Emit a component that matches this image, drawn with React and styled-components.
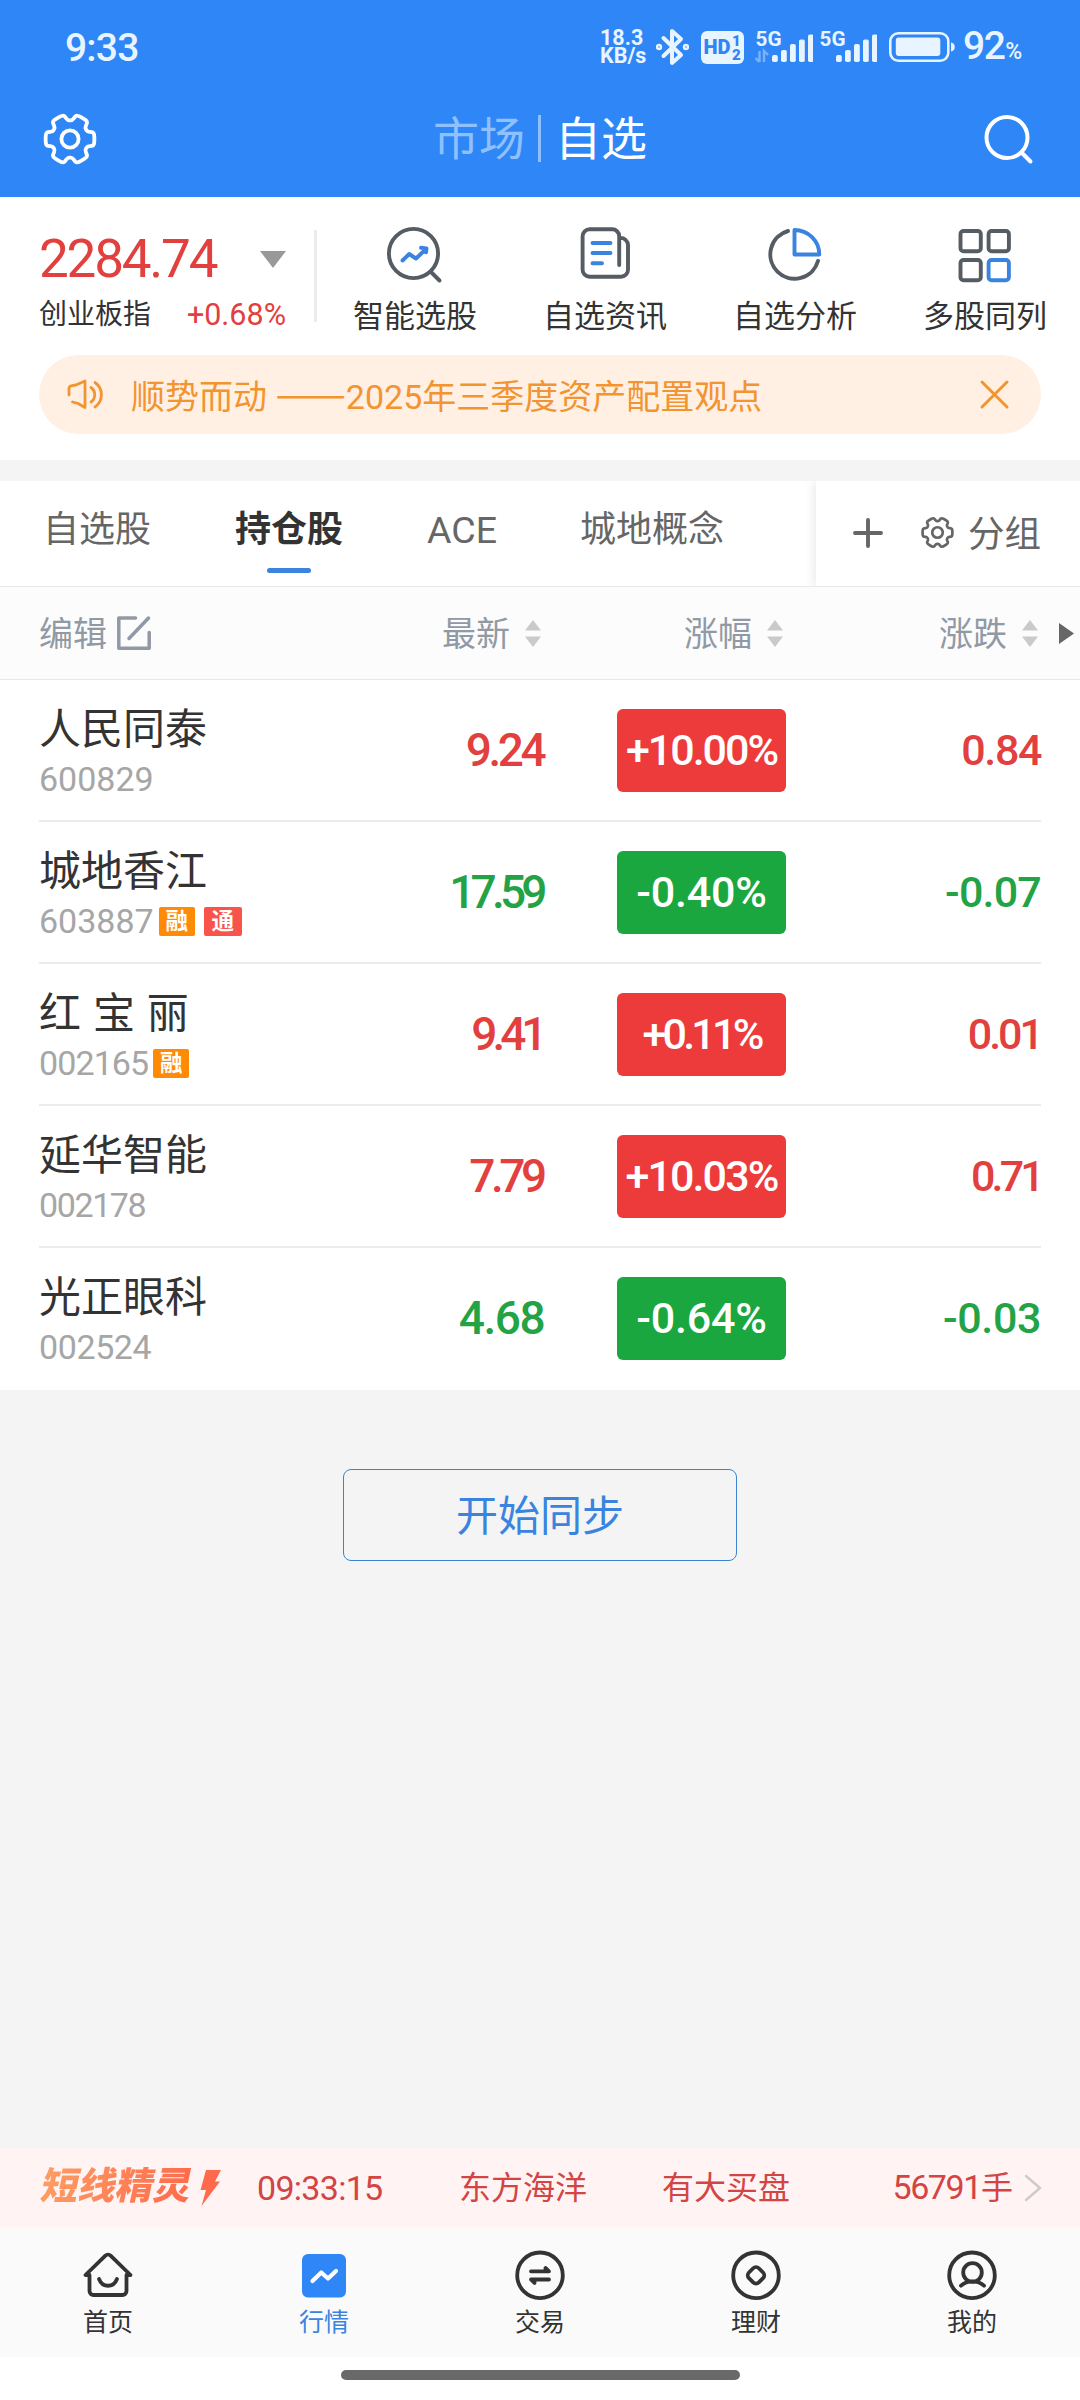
import styled, { createGlobalStyle } from 'styled-components';

const GlobalStyle = createGlobalStyle`
  * {
    box-sizing: border-box;
  }

  body {
    margin: 0;
    background: #f4f4f4;
    font-family: Roboto, 'Noto Sans CJK SC', sans-serif;
    color: #333;
  }

  svg {
    display: block;
    flex: none;
  }
`;

const colors = {
  brand: '#2f86f6',
  link: '#3a84e0',
  up: '#e2403f',
  down: '#23a246',
  upFill: '#ed3a3b',
  downFill: '#1ba73f',
  muted: '#9199a4',
  orange: '#f2942f',
};

const Screen = styled.div`
  width: 1080px;
  height: 2400px;
  display: flex;
  flex-direction: column;
  background: #f4f4f4;
  overflow: hidden;
  white-space: nowrap;
`;

/* ---------- top ---------- */

const TopArea = styled.header`
  background: ${colors.brand};
`;

const StatusBar = styled.div`
  height: 80px;
  padding: 14px 58px 0 65px;
  display: flex;
  align-items: center;
  justify-content: space-between;
  color: #e8f4ff;
`;

const Clock = styled.span`
  padding-top: 1px;
  font-size: 39px;
  font-weight: 500;
  letter-spacing: -0.8px;
`;

const StatusIcons = styled.div`
  display: flex;
  align-items: center;
`;

const NetSpeed = styled.div`
  width: 46px;
  margin-right: 10px;
  display: flex;
  flex-direction: column;
  font-size: 21.5px;
  font-weight: 700;
  line-height: 18.5px;
`;

const Gap = styled.i`
  width: ${props => props.$w}px;
`;

const BatteryLevel = styled.span`
  width: 59px;
  padding-top: 4px;
  font-size: 39px;
  font-weight: 500;
  line-height: 40px;
  letter-spacing: -1.5px;

  small {
    font-size: 23px;
    margin-left: 1px;
  }
`;

const TitleBar = styled.div`
  height: 117px;
  padding: 0 46px 0 43px;
  display: flex;
  align-items: center;
  justify-content: space-between;
  color: #fff;
`;

const TitleTabs = styled.div`
  display: flex;
  align-items: center;
`;

const TitleTab = styled.span`
  font-size: 46px;
  line-height: 60px;
  padding-top: 1px;
  color: ${props => (props.$active ? '#fff' : '#8fc0ff')};
`;

const TitleDivider = styled.i`
  width: 3px;
  height: 47px;
  margin: 0 14px 0 13px;
  background: #8fc0ff;
`;

/* ---------- index + shortcuts ---------- */

const Panel = styled.section`
  height: 263px;
  background: #fff;
`;

const PanelTop = styled.div`
  height: 158px;
  display: flex;
`;

const IndexCard = styled.div`
  width: 314px;
  padding: 32px 28px 0 39px;
`;

const IndexLine = styled.div`
  display: flex;
  align-items: center;
  justify-content: space-between;
`;

const IndexValue = styled.span`
  font-size: 53px;
  line-height: 60px;
  letter-spacing: -2.2px;
  color: ${colors.up};
`;

const IndexName = styled.span`
  margin-top: 8px;
  font-size: 28px;
  line-height: 36px;
`;

const IndexChange = styled.span`
  margin-top: 7px;
  font-size: 30.5px;
  line-height: 36px;
  color: ${colors.up};
`;

const VerticalRule = styled.i`
  width: 3px;
  height: 92px;
  margin: 33px 3px 0 0;
  background: #ececec;
`;

const Shortcut = styled.div`
  width: 190px;
  padding-top: 27px;
  display: flex;
  flex-direction: column;
  align-items: center;
  gap: 13px;
  font-size: 31px;
  line-height: 40px;
`;

const Notice = styled.div`
  height: 79px;
  margin: 0 39px;
  padding: 0 31px 0 27px;
  display: flex;
  align-items: center;
  border-radius: 40px;
  background: #fff0e3;
  color: ${colors.orange};
`;

const NoticeText = styled.span`
  flex: 1;
  margin-left: 24px;
  font-size: 34px;
  line-height: 44px;
`;

const Dash = styled.span`
  font-family: 'Noto Sans CJK SC', sans-serif;
  font-size: 42px;
  line-height: 1;
`;

/* ---------- group tabs ---------- */

const TabBar = styled.div`
  height: 106px;
  margin-top: 21px;
  display: flex;
  background: #fff;
  border-bottom: 1px solid #e8e8e8;
  overflow: hidden;
`;

const TabList = styled.div`
  width: 816px;
  padding-left: 43px;
  display: flex;
  gap: 84px;
`;

const Tab = styled.div`
  padding-top: 28px;
  display: flex;
  flex-direction: column;
  align-items: center;
  font-size: ${props => (props.$latin ? 37.5 : 36)}px;
  line-height: 42px;
  color: ${props => (props.$active ? '#333' : '#666')};
  font-weight: ${props => (props.$active ? 700 : 400)};

  &::after {
    content: '';
    width: 44px;
    height: 5px;
    margin-top: 17px;
    border-radius: 3px;
    background: ${props => (props.$active ? colors.link : 'transparent')};
  }

  &:last-child {
    margin-left: -1px;
  }
`;

const TabActions = styled.div`
  flex: 1;
  padding: 0 38px 2px 36px;
  display: flex;
  align-items: center;
  color: #666;
  font-size: 36.5px;
  box-shadow: -3px 0 9px rgba(0, 0, 0, 0.08);

  span {
    margin: -2px 0 0 14px;
  }
`;

/* ---------- quote table ---------- */

const TableHead = styled.div`
  height: 93px;
  padding-left: 39px;
  display: flex;
  align-items: center;
  background: #fcfcfd;
  border-bottom: 1px solid #e8e8e8;
  color: ${colors.muted};
  font-size: 34px;
  line-height: 46px;
`;

const HeadCell = styled.div`
  width: ${props => props.$w}px;
  padding-right: ${props => props.$right || 0}px;
  display: flex;
  align-items: center;
  justify-content: ${props => (props.$start ? 'flex-start' : 'flex-end')};
  gap: ${props => (props.$start ? 9 : 15)}px;

  span {
    padding-top: 1px;
  }
`;

const MoreArrow = styled.svg`
  margin-left: 18px;
`;

const Table = styled.section`
  padding: 0 39px;
  background: #fff;
`;

const Row = styled.div`
  height: 142px;
  display: flex;
  align-items: center;
  border-bottom: 2px solid #ececec;

  &:last-child {
    border-bottom-color: #fff;
  }
`;

const Stock = styled.div`
  width: 261px;
`;

const StockName = styled.div`
  font-size: 42px;
  line-height: 50px;
  padding-top: 2px;
  word-spacing: 1.5px;
  white-space: pre;
`;

const StockMeta = styled.div`
  height: 36px;
  margin-top: 6px;
  display: flex;
  align-items: center;
  color: #a6a6a6;
  font-size: 34px;
  line-height: 36px;
`;

const Code = styled.span`
  margin-right: 5px;
  letter-spacing: ${props => props.$track || 0}px;
`;

const Tag = styled.span`
  width: ${props => (props.$red ? 38 : 36)}px;
  height: 29px;
  margin-right: 9px;
  border-radius: 2px;
  background: ${props => (props.$red ? '#f9544c' : '#ff8a05')};
  color: #fff;
  font-size: 22.5px;
  font-weight: 700;
  line-height: 29px;
  text-align: center;
`;

const Price = styled.div`
  width: 245px;
  padding: 0 ${props => -props.$track / 2}px 1px 0;
  text-align: right;
  font-size: 46px;
  font-weight: 500;
  letter-spacing: ${props => props.$track}px;
  color: ${props => (props.$up ? colors.up : colors.down)};
`;

const Percent = styled.div`
  width: 169px;
  height: 83px;
  margin-left: 72px;
  border-radius: 6px;
  background: ${props => (props.$up ? colors.upFill : colors.downFill)};
  color: #fff;
  font-size: 43px;
  font-weight: 500;
  line-height: 82px;
  letter-spacing: ${props => props.$track}px;
  text-align: center;
`;

const Change = styled.div`
  flex: 1;
  text-align: right;
  font-size: 43px;
  font-weight: 500;
  letter-spacing: ${props => props.$track}px;
  color: ${props => (props.$up ? colors.up : colors.down)};
`;

const SyncArea = styled.div`
  flex: 1;
  padding-top: 79px;
  display: flex;
  justify-content: center;
  align-items: flex-start;
`;

const SyncButton = styled.button`
  width: 394px;
  height: 92px;
  padding: 0 0 6px;
  border: 1.5px solid #3a84cf;
  border-radius: 8px;
  background: transparent;
  color: ${colors.link};
  font: inherit;
  font-size: 42px;
`;

/* ---------- ticker + nav ---------- */

const Ticker = styled.div`
  height: 79px;
  padding: 0 37px 0 42px;
  display: flex;
  align-items: center;
  background: #fff4f3;
  color: #d34444;
  font-size: 32px;
  line-height: 44px;
`;

const TickerLogo = styled.span`
  width: 151px;
  margin-top: -4px;
  font-size: 37.5px;
  font-weight: 900;
  transform: skewX(-12deg);
  background: linear-gradient(90deg, #ff9c62, #ff6a4c);
  -webkit-background-clip: text;
  -webkit-text-fill-color: transparent;
`;

const TickerTime = styled.span`
  width: 202px;
  margin-left: 36px;
  font-size: 34px;
  letter-spacing: -0.7px;
`;

const TickerCell = styled.span`
  width: 203px;
`;

const TickerVolume = styled.span`
  flex: 1;
  margin-right: 10px;
  text-align: right;

  b {
    font-size: 34px;
    font-weight: 400;
    letter-spacing: -1.4px;
  }
`;

const NavBar = styled.nav`
  height: 130px;
  display: flex;
  background: #fafafa;
`;

const NavItem = styled.div`
  width: 216px;
  padding-top: 23px;
  display: flex;
  flex-direction: column;
  align-items: center;
  gap: 4px;
  font-size: 25px;
  line-height: 34px;
  color: ${props => (props.$active ? colors.link : '#333')};
`;

const HomeIndicator = styled.div`
  height: 43px;
  padding-top: 13px;
  background: #fff;

  &::after {
    content: '';
    display: block;
    width: 399px;
    height: 10px;
    margin: 0 auto;
    border-radius: 5px;
    background: #696969;
  }
`;

/* ---------- icons ---------- */

// Six-tooth outline with rounded corners, centred on 0,0
const gearPath = (() => {
  const pts = [];
  for (let k = 0; k < 6; k++) {
    [[-15, 25.2], [15, 25.2], [23, 18.8], [37, 18.8]].forEach(([a, r]) => {
      const t = ((k * 60 + a) * Math.PI) / 180;
      pts.push([Math.cos(t) * r, Math.sin(t) * r]);
    });
  }
  const mix = (p, q, f) => `${(p[0] + (q[0] - p[0]) * f).toFixed(2)} ${(p[1] + (q[1] - p[1]) * f).toFixed(2)}`;
  return pts
    .map((p, i) => {
      const prev = pts[(i + 23) % 24];
      const next = pts[(i + 1) % 24];
      return `${i ? 'L' : 'M'}${mix(p, prev, 0.35)}Q${p[0].toFixed(2)} ${p[1].toFixed(2)} ${mix(p, next, 0.35)}`;
    })
    .join('') + 'Z';
})();

const GearIcon = ({ size, stroke }) => (
  <svg width={size} height={size} viewBox="-27 -27 54 54" fill="none" stroke="currentColor" strokeWidth={stroke} strokeLinejoin="round">
    <path d={gearPath} />
    <circle r="8.6" />
  </svg>
);

const BluetoothIcon = () => (
  <svg width="33" height="38" viewBox="0 0 33 38" fill="none" stroke="currentColor" strokeWidth="4" strokeLinejoin="round" strokeLinecap="round">
    <path d="M7.5 10L25 27L16 35V3L25 11L7.5 28" />
    <circle cx="3" cy="19" r="1.2" />
    <circle cx="30" cy="19" r="1.2" />
  </svg>
);

const HdIcon = () => (
  <svg width="43" height="33" viewBox="0 0 43 33" fontFamily="Roboto" fontWeight="900">
    <rect width="43" height="33" rx="6" fill="#e8f4ff" />
    <g fill={colors.brand}>
      <text x="2.5" y="23" fontSize="19.5" textLength="27" lengthAdjust="spacingAndGlyphs">HD</text>
      <text x="31" y="15" fontSize="15">1</text>
      <text x="31" y="29" fontSize="15">2</text>
    </g>
  </svg>
);

const SignalIcon = ({ data }) => (
  <svg width="58" height="44" viewBox="0 -6 58 44" fill="currentColor">
    <text x="0.5" y="15" fontFamily="Roboto" fontWeight="700" fontSize="20.5" textLength="26" lengthAdjust="spacingAndGlyphs">5G</text>
    {data && <path d="M4.5 20v11M0.5 27l4 4M9 31V20l4 4" fill="none" stroke="currentColor" strokeWidth="2.4" opacity="0.4" />}
    {[24, 19, 13, 8.5, 3.5].map((y, i) => (
      <rect key={y} x={17 + i * 9} y={y} width="5.8" height={31 - y} rx="1.8" />
    ))}
  </svg>
);

const BatteryIcon = () => (
  <svg width="66" height="30" viewBox="0 0 66 30">
    <rect x="1.3" y="1.3" width="58" height="27.4" rx="8" fill="none" stroke="#e8f4ff" strokeWidth="2.6" />
    <rect x="6.8" y="5.5" width="44.5" height="18.5" rx="3" fill="#e8f4ff" />
    <path d="M62 10.5c5 0 5 9 0 9z" fill="#e8f4ff" />
  </svg>
);

const SearchIcon = () => (
  <svg width="51" height="52" viewBox="0 0 51 52" fill="none" stroke="#fff" strokeWidth="4" strokeLinecap="round">
    <circle cx="24" cy="24.5" r="20.5" />
    <path d="M39 40l8.5 8.5" />
  </svg>
);

const ToolIcon = ({ children }) => (
  <svg width="60" height="60" viewBox="0 0 60 60" fill="none" stroke="#555c63" strokeWidth="3.9" strokeLinecap="round" strokeLinejoin="round">
    {children}
  </svg>
);

const shortcuts = [
  {
    label: '智能选股',
    icon: (
      <>
        <circle cx="28.5" cy="29.5" r="24.6" />
        <path d="M46 48l8.5 8.5" />
        <path d="M17.5 36.5l6.7-6.5 6.8 4.5L40.5 25.5M36 23.8l5.5.6-.4 4" stroke={colors.link} />
      </>
    ),
  },
  {
    label: '自选资讯',
    icon: (
      <>
        <path d="M44.2 41V12a7 7 0 0 0-7-6.7H14.6a7 7 0 0 0-7 7V45.7a7 7 0 0 0 7 7H46a7 7 0 0 0 7-7V22a7.5 7.5 0 0 0-8.8-8" />
        <path d="M17.5 19H35.5M17.5 29H35.5M17.5 39.2H27" stroke={colors.link} />
      </>
    ),
  },
  {
    label: '自选分析',
    icon: (
      <>
        <path d="M23 7A24.3 24.3 0 1 0 53 37" />
        <path d="M29.5 6V30.5H54.3A24.8 24.5 0 0 0 29.5 6Z" stroke={colors.link} />
      </>
    ),
  },
  {
    label: '多股同列',
    icon: (
      <>
        <rect x="5.5" y="7" width="20.3" height="20.3" rx="3" />
        <rect x="33.6" y="7" width="20.3" height="20.3" rx="3" />
        <rect x="5.5" y="36" width="20.3" height="20.3" rx="3" />
        <rect x="33.6" y="36" width="20.3" height="20.3" rx="3" stroke={colors.link} />
      </>
    ),
  },
];

const SpeakerIcon = () => (
  <svg width="41" height="38" viewBox="0 0 41 38" fill="none" stroke="currentColor" strokeWidth="2.8" strokeLinecap="round" strokeLinejoin="round">
    <path d="M3 19v-6c0-2 1-3 3-3.3L10 9l9-4V31.5l-7-4L6.5 26" />
    <path d="M25 11.5c5 3.5 5 11 0 14.5M29 6.5c8.5 6 8.5 18.5 0 24.5" />
  </svg>
);

const CloseIcon = () => (
  <svg width="31" height="31" viewBox="0 0 31 31" fill="none" stroke="currentColor" strokeWidth="3" strokeLinecap="round">
    <path d="M3 3L28 28M28 3L3 28" />
  </svg>
);

const PlusIcon = () => (
  <svg width="32" height="32" viewBox="0 0 32 32" fill="none" stroke="currentColor" strokeWidth="3.9" strokeLinecap="round">
    <path d="M16 3V29M3 16H29" />
  </svg>
);

const EditIcon = () => (
  <svg width="36" height="36" viewBox="0 0 36 36" fill="none" stroke="currentColor" strokeWidth="3.5" strokeLinecap="round" strokeLinejoin="round">
    <path d="M19.5 3H2.8V33.2H33.2V17.5M32.5 3L13 23.5" />
  </svg>
);

const SortIcon = () => (
  <svg width="16" height="27" viewBox="0 0 16 27" fill="#cacaca">
    <path d="M8 0L16 10.5H0ZM8 27L0 16.5H16Z" />
  </svg>
);

const navItems = [
  {
    label: '首页',
    icon: (
      <>
        <path d="M3.5 25H7.5V41a4 4 0 0 0 4 4H40.5a4 4 0 0 0 4-4V25H48.5L28.6 5.6a3.7 3.7 0 0 0-5.2 0Z" />
        <path d="M17 29c3.5 9 14.5 9 18 0" />
      </>
    ),
  },
  {
    label: '行情',
    active: true,
    icon: (
      <>
        <rect x="4" y="4" width="44" height="43.5" rx="6" fill={colors.brand} stroke="none" />
        <path d="M14.5 31l8.8-8.5 6.7 6 8-7.5" stroke="#fff" strokeWidth="4.2" />
      </>
    ),
  },
  {
    label: '交易',
    icon: (
      <>
        <circle cx="26" cy="25.3" r="22.8" />
        <path d="M17 21.3H35L31.5 18V21M35 29.5H17L20.5 33V30" strokeWidth="3.8" />
      </>
    ),
  },
  {
    label: '理财',
    icon: (
      <>
        <circle cx="26" cy="25.3" r="22.8" />
        <rect x="19" y="18.3" width="14" height="14" rx="4" transform="rotate(45 26 25.3)" />
      </>
    ),
  },
  {
    label: '我的',
    icon: (
      <>
        <circle cx="26" cy="25.3" r="22.8" />
        <circle cx="26.5" cy="22.5" r="9.3" />
        <path d="M15 35.7c6-5.8 17-5.8 23 0" />
      </>
    ),
  },
];

const groups = ['自选股', '持仓股', 'ACE', '城地概念'];

// track: letter spacing of price, percent and change
const stocks = [
  { name: '人民同泰', code: '600829', tags: [], price: '9.24', pct: '+10.00%', change: '0.84', up: true, track: [-3.4, -2, -1.4] },
  { name: '城地香江', code: '603887', tags: ['融', '通'], price: '17.59', pct: '-0.40%', change: '-0.07', up: false, track: [-4.8, -0.2, -0.8] },
  { name: '红 宝 丽', code: '002165', codeTrack: -0.9, tags: ['融'], price: '9.41', pct: '+0.11%', change: '0.01', up: true, track: [-5, -3.8, -3] },
  { name: '延华智能', code: '002178', codeTrack: -1.4, tags: [], price: '7.79', pct: '+10.03%', change: '0.71', up: true, track: [-4.4, -1.9, -3.8] },
  { name: '光正眼科', code: '002524', codeTrack: -0.4, tags: [], price: '4.68', pct: '-0.64%', change: '-0.03', up: false, track: [-1.4, -0.2, -0.4] },
];

const App = () => {
  return (
    <>
      <GlobalStyle />
      <Screen>
        <TopArea>
          <StatusBar>
            <Clock>9:33</Clock>
            <StatusIcons>
              <NetSpeed>
                <span>18.3</span>
                <span>KB/s</span>
              </NetSpeed>
              <BluetoothIcon />
              <Gap $w={12} />
              <HdIcon />
              <Gap $w={11} />
              <SignalIcon data />
              <Gap $w={6} />
              <SignalIcon />
              <Gap $w={12} />
              <BatteryIcon />
              <Gap $w={8} />
              <BatteryLevel>92<small>%</small></BatteryLevel>
            </StatusIcons>
          </StatusBar>
          <TitleBar>
            <GearIcon size={54} stroke={3.8} />
            <TitleTabs>
              <TitleTab>市场</TitleTab>
              <TitleDivider />
              <TitleTab $active>自选</TitleTab>
            </TitleTabs>
            <SearchIcon />
          </TitleBar>
        </TopArea>

        <Panel>
          <PanelTop>
            <IndexCard>
              <IndexLine>
                <IndexValue>2284.74</IndexValue>
                <svg width="26" height="17" viewBox="0 0 26 17" fill="#999">
                  <path d="M0 0H26L13 17Z" />
                </svg>
              </IndexLine>
              <IndexLine>
                <IndexName>创业板指</IndexName>
                <IndexChange>+0.68%</IndexChange>
              </IndexLine>
            </IndexCard>
            <VerticalRule />
            {shortcuts.map(item => (
              <Shortcut key={item.label}>
                <ToolIcon>{item.icon}</ToolIcon>
                <span>{item.label}</span>
              </Shortcut>
            ))}
          </PanelTop>
          <Notice>
            <SpeakerIcon />
            <NoticeText>顺势而动 <Dash>——</Dash>2025年三季度资产配置观点</NoticeText>
            <CloseIcon />
          </Notice>
        </Panel>

        <TabBar>
          <TabList>
            {groups.map(name => (
              <Tab key={name} $active={name === '持仓股'} $latin={name === 'ACE'}>{name}</Tab>
            ))}
          </TabList>
          <TabActions>
            <PlusIcon />
            <Gap $w={37} />
            <GearIcon size={33} stroke={4.4} />
            <span>分组</span>
          </TabActions>
        </TabBar>

        <TableHead>
          <HeadCell $w={261} $start>
            <span>编辑</span>
            <EditIcon />
          </HeadCell>
          <HeadCell $w={245} $right={4}>
            <span>最新</span>
            <SortIcon />
          </HeadCell>
          <HeadCell $w={241} $right={3}>
            <span>涨幅</span>
            <SortIcon />
          </HeadCell>
          <HeadCell $w={255} $right={3}>
            <span>涨跌</span>
            <SortIcon />
          </HeadCell>
          <MoreArrow width="15" height="21" viewBox="0 0 15 21" fill="#666">
            <path d="M0 0L15 10.5L0 21Z" />
          </MoreArrow>
        </TableHead>
        <Table>
          {stocks.map(stock => (
            <Row key={stock.code}>
              <Stock>
                <StockName>{stock.name}</StockName>
                <StockMeta>
                  <Code $track={stock.codeTrack}>{stock.code}</Code>
                  {stock.tags.map(tag => (
                    <Tag key={tag} $red={tag === '通'}>{tag}</Tag>
                  ))}
                </StockMeta>
              </Stock>
              <Price $up={stock.up} $track={stock.track[0]}>{stock.price}</Price>
              <Percent $up={stock.up} $track={stock.track[1]}>{stock.pct}</Percent>
              <Change $up={stock.up} $track={stock.track[2]}>{stock.change}</Change>
            </Row>
          ))}
        </Table>

        <SyncArea>
          <SyncButton>开始同步</SyncButton>
        </SyncArea>

        <Ticker>
          <TickerLogo>短线精灵</TickerLogo>
          <svg width="28" height="38" viewBox="0 0 28 38" fill="#ff6a4c">
            <path d="M13 1H28L22 12.5H27L8.5 37L13 21H7.5Z" />
          </svg>
          <TickerTime>09:33:15</TickerTime>
          <TickerCell>东方海洋</TickerCell>
          <TickerCell>有大买盘</TickerCell>
          <TickerVolume><b>56791</b>手</TickerVolume>
          <svg width="20" height="30" viewBox="0 0 20 30" fill="none" stroke="#cfcaca" strokeWidth="2.4" strokeLinecap="round">
            <path d="M3 3L17 15L3 27" />
          </svg>
        </Ticker>
        <NavBar>
          {navItems.map(item => (
            <NavItem key={item.label} $active={item.active}>
              <svg width="52" height="52" viewBox="0 0 52 52" fill="none" stroke="#333" strokeWidth="3.8" strokeLinecap="round" strokeLinejoin="round">
                {item.icon}
              </svg>
              <span>{item.label}</span>
            </NavItem>
          ))}
        </NavBar>
        <HomeIndicator />
      </Screen>
    </>
  );
};

export default App;
